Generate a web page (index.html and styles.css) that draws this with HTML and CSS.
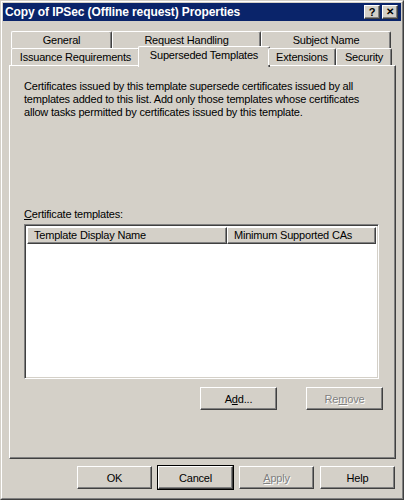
FILE: index.html
```html
<!DOCTYPE html>
<html lang="en">
<head>
    <meta charset="UTF-8">
    <title>Copy of IPSec (Offline request) Properties</title>
    <link rel="stylesheet" href="styles.css">
</head>
<body>
    <div class="window">
        <div class="frame">
            <div class="titlebar">
                <span class="title">Copy of IPSec (Offline request) Properties</span>
                <div class="caption-buttons">
                    <span class="cap-btn">?</span>
                    <span class="cap-btn close">&#x2715;</span>
                </div>
            </div>

            <div class="content">
                <div class="tabs">
                    <div class="tab-row">
                        <div class="tab w-general">General</div>
                        <div class="tab w-request">Request Handling</div>
                        <div class="tab w-subject">Subject Name</div>
                    </div>
                    <div class="tab-row front">
                        <div class="tab w-issuance">Issuance Requirements</div>
                        <div class="tab w-superseded selected">Superseded Templates</div>
                        <div class="tab w-extensions">Extensions</div>
                        <div class="tab w-security">Security</div>
                    </div>
                </div>

                <div class="panel">
                    <p class="description">Certificates issued by this template supersede certificates issued by all templates added to this list. Add only those templates whose certificates allow tasks permitted by certificates issued by this template.</p>

                    <div class="label"><u>C</u>ertificate templates:</div>
                    <div class="listview">
                        <div class="list-header">
                            <div class="col-head col-name">Template Display Name</div>
                            <div class="col-head col-ca">Minimum Supported CAs</div>
                        </div>
                    </div>

                    <div class="list-actions">
                        <button class="btn">A<u>d</u>d...</button>
                        <button class="btn disabled">Re<u>m</u>ove</button>
                    </div>
                </div>

                <div class="dialog-buttons">
                    <button class="btn">OK</button>
                    <button class="btn default">Cancel</button>
                    <button class="btn disabled"><u>A</u>pply</button>
                    <button class="btn">Help</button>
                </div>
            </div>
        </div>
    </div>
</body>
</html>
```

FILE: styles.css
```css
body {
    margin: 0;
    padding: 0;
    font-family: "Liberation Sans", Arial, sans-serif;
    font-size: 11px;
    letter-spacing: -0.2px;
    color: #000;
    background: #d4d0c8;
}

.window {
    width: 404px;
    height: 500px;
    box-sizing: border-box;
    border: 1px solid;
    border-color: #d4d0c8 #404040 #404040 #d4d0c8;
    background: #d4d0c8;
}

.frame {
    height: 100%;
    box-sizing: border-box;
    border: 1px solid;
    border-color: #fff #808080 #808080 #fff;
    padding: 1px;
    display: flex;
    flex-direction: column;
}

.titlebar {
    height: 18px;
    background: #0a246a;
    display: flex;
    align-items: center;
    justify-content: space-between;
    padding: 0 3px 0 2px;
}

.title {
    color: #fff;
    font-weight: bold;
    font-size: 12px;
    letter-spacing: -0.1px;
}

.caption-buttons {
    display: flex;
    gap: 2px;
}

.cap-btn {
    width: 16px;
    height: 14px;
    box-sizing: border-box;
    background: #d4d0c8;
    border: 1px solid;
    border-color: #fff #404040 #404040 #fff;
    box-shadow: inset -1px -1px 0 #808080;
    display: flex;
    align-items: center;
    justify-content: center;
    font-weight: bold;
    font-size: 11px;
    line-height: 1;
}

.cap-btn.close {
    font-size: 10px;
}

.content {
    flex: 1;
    padding: 10px 5px 0 6px;
    display: flex;
    flex-direction: column;
}

/* tabs */
.tabs {
    padding-left: 2px;
    position: relative;
    z-index: 1;
}

.tab-row {
    display: flex;
    height: 17px;
}

.tab {
    box-sizing: border-box;
    height: 17px;
    border-top: 1px solid #fff;
    border-left: 1px solid #fff;
    border-right: 1px solid #404040;
    box-shadow: inset -1px 0 0 #808080;
    border-radius: 2px 2px 0 0;
    text-align: center;
    line-height: 16px;
    background: #d4d0c8;
}

.w-general { width: 101px; }
.w-request { width: 149px; }
.w-subject { width: 130px; }
.w-issuance { width: 129px; }
.w-superseded { width: 128px; }
.w-extensions { width: 68px; }
.w-security { width: 56px; }

.tab.selected {
    height: 21px;
    margin: -2px -2px 0 -2px;
    width: 132px;
    line-height: 17px;
}

.panel {
    height: 394px;
    box-sizing: border-box;
    border: 1px solid;
    border-color: #fff #404040 #404040 #fff;
    box-shadow: inset -1px -1px 0 #808080;
    width: 387px;
    padding: 14px 14px 0 14px;
}

.description {
    margin: 0;
    line-height: 13px;
    width: 350px;
}

.label {
    margin-top: 89px;
    line-height: 13px;
}

.listview {
    margin-top: 3px;
    width: 355px;
    height: 155px;
    box-sizing: border-box;
    background: #fff;
    border: 1px solid;
    border-color: #808080 #fff #fff #808080;
    box-shadow: inset 1px 1px 0 #404040, inset -1px -1px 0 #d4d0c8;
    padding: 2px;
}

.list-header {
    display: flex;
    height: 17px;
}

.col-head {
    box-sizing: border-box;
    background: #d4d0c8;
    border: 1px solid;
    border-color: #fff #404040 #404040 #fff;
    box-shadow: inset -1px -1px 0 #808080;
    padding-left: 6px;
    line-height: 15px;
}

.col-name { width: 200px; }
.col-ca { flex: 1; }

.list-actions {
    margin-top: 8px;
    display: flex;
    justify-content: flex-end;
    gap: 29px;
    margin-right: -2px;
}

.btn {
    width: 77px;
    height: 23px;
    box-sizing: border-box;
    background: #d4d0c8;
    border: 1px solid;
    border-color: #fff #404040 #404040 #fff;
    box-shadow: inset -1px -1px 0 #808080;
    font-family: "Liberation Sans", Arial, sans-serif;
    font-size: 11px;
    letter-spacing: -0.2px;
    color: #000;
    padding: 0;
}

.btn.disabled {
    color: #808080;
    text-shadow: 1px 1px 0 #fff;
}

.btn.default {
    outline: 1px solid #000;
    outline-offset: 0;
}

.dialog-buttons {
    display: flex;
    justify-content: flex-end;
    gap: 6px;
    margin-top: 7px;
    padding-right: 1px;
}

.dialog-buttons .btn {
    width: 75px;
}
```
